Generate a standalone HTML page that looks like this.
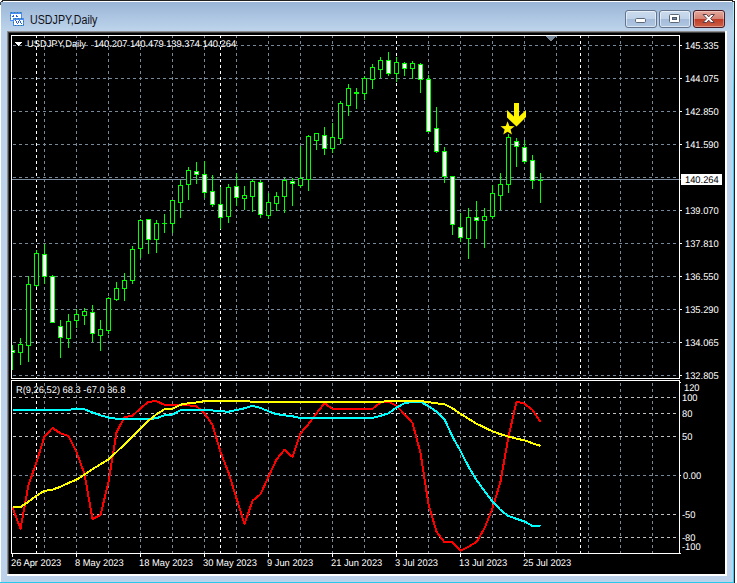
<!DOCTYPE html>
<html><head><meta charset="utf-8"><title>USDJPY,Daily</title>
<style>
html,body{margin:0;padding:0;background:#fff;}
body{width:737px;height:583px;position:relative;overflow:hidden;font-family:"Liberation Sans",sans-serif;}
#win{position:absolute;left:0;top:0;width:735px;height:583px;background:#bcd2ea;overflow:hidden;}
#win div{position:absolute;}
#tb{left:0;top:2px;width:735px;height:29px;background:linear-gradient(#9ab5d6,#bed4ec);}
.t{position:absolute;font-size:9.7px;line-height:10px;height:10px;white-space:pre;letter-spacing:0;transform-origin:0 100%;transform:scaleX(0.962);text-rendering:geometricPrecision;}
#title{position:absolute;left:29.5px;top:13px;font-size:12px;line-height:14px;color:#101018;white-space:pre;transform-origin:0 0;transform:scaleX(0.89);}
.btn{top:10px;width:30px;height:16px;border:1px solid #64748c;border-radius:3px;background:linear-gradient(#cbdbee 0,#bfd2e8 48%,#a4bcda 52%,#b0c7e2 100%);box-shadow:inset 0 0 0 1px rgba(255,255,255,.55);}
</style></head><body>
<div id="win">
 <div id="tb"></div>
 <div style="left:0;top:0;width:735px;height:1px;background:#202020"></div>
 <div style="left:0;top:1px;width:734px;height:1px;background:#fdfeff"></div>
 <div style="left:0;top:1px;width:1px;height:582px;background:#fbfdff"></div>
 <div style="left:733px;top:2px;width:1px;height:581px;background:linear-gradient(#b4ecfa 0,#9ee4f7 30px,#35cdf5 90px,#35cdf5 100%)"></div>
 <div style="left:734px;top:0;width:1px;height:583px;background:#202020"></div>
 <div style="left:0px;top:582px;width:734px;height:1px;background:#27c9ec"></div>
 <!-- corners -->
 <div style="left:0;top:0;width:2px;height:2px;background:#fff"></div>
 <div style="left:1px;top:1px;width:2px;height:1px;background:#303030"></div>
 <div style="left:0px;top:2px;width:1px;height:3px;background:#505050"></div>
 <div style="left:733px;top:0;width:2px;height:1px;background:#fff"></div>
 <div style="left:732px;top:1px;width:2px;height:1px;background:#303030"></div>
 <!-- client sunken border + black -->
 <div style="left:7px;top:31px;width:720px;height:545px;background:#fff"></div>
 <div style="left:7px;top:31px;width:718px;height:543px;background:#8c8c8c"></div>
 <div style="left:8px;top:32px;width:717px;height:542px;background:#404040"></div>
 <div style="left:9px;top:33px;width:716px;height:541px;background:#000"></div>
 <!-- icon -->
 <svg style="position:absolute;left:10px;top:12px" width="15" height="15" viewBox="0 0 15 15" shape-rendering="crispEdges">
  <rect x="0" y="0" width="12" height="9" fill="#4a8cf6"/>
  <rect x="1" y="2" width="10" height="6" fill="#fff"/>
  <rect x="3" y="6" width="11" height="8" fill="#4a8cf6"/>
  <rect x="4" y="8" width="9" height="5" fill="#fff"/>
  <g fill="#2f5fd8"><rect x="2" y="4" width="2" height="1"/><rect x="3" y="3" width="1" height="1"/><rect x="6" y="3" width="1" height="2"/><rect x="7" y="4" width="1" height="1"/>
  <rect x="5" y="8" width="1" height="1"/><rect x="6" y="9" width="1" height="2"/><rect x="7" y="11" width="1" height="1"/><rect x="8" y="9" width="1" height="2"/><rect x="9" y="8" width="1" height="1"/><rect x="10" y="9" width="1" height="2"/><rect x="11" y="11" width="1" height="1"/></g>
  <g fill="#2f7f6f"><rect x="1" y="0" width="1" height="1"/><rect x="4" y="0" width="1" height="1"/><rect x="7" y="0" width="1" height="1"/><rect x="10" y="0" width="1" height="1"/><rect x="0" y="3" width="1" height="1"/><rect x="0" y="6" width="1" height="1"/><rect x="5" y="6" width="1" height="1"/><rect x="8" y="6" width="1" height="1"/><rect x="11" y="6" width="1" height="1"/><rect x="13" y="9" width="1" height="1"/><rect x="13" y="12" width="1" height="1"/><rect x="5" y="13" width="1" height="1"/><rect x="8" y="13" width="1" height="1"/><rect x="11" y="13" width="1" height="1"/><rect x="3" y="10" width="1" height="1"/></g>
 </svg>
 <span id="title">USDJPY,Daily</span>
 <!-- buttons -->
 <div class="btn" style="left:625px"></div>
 <div class="btn" style="left:659px"></div>
 <div class="btn" style="left:693px;border-color:#4c1a22;background:linear-gradient(#e4a89c 0,#d58374 48%,#c03c27 52%,#cb6046 100%);box-shadow:inset 0 0 0 1px rgba(255,255,255,.35)"></div>
 <svg style="position:absolute;left:625px;top:10px" width="100" height="18" viewBox="0 0 100 18">
  <rect x="10.5" y="8.5" width="10" height="4" rx="1.2" fill="#fff" stroke="#5c6878"/>
  <rect x="44.5" y="4.5" width="10" height="8" rx="1" fill="#fff" stroke="#5c6878"/>
  <rect x="47.5" y="7.5" width="4" height="2" fill="#7688a4" stroke="#4c5868"/>
  <path d="M78 4.5 L81.6 4.5 L83.7 6.9 L85.8 4.5 L89.4 4.5 L85.6 8.6 L89.4 12.5 L85.8 12.5 L83.7 10.2 L81.6 12.5 L78 12.5 L81.8 8.6 Z" fill="#fff" stroke="#5a4048" stroke-width="1"/>
 </svg>
</div>
<svg width="737" height="583" viewBox="0 0 737 583" style="position:absolute;left:0;top:0"><defs><clipPath id="ind"><rect x="12" y="381" width="667" height="172"/></clipPath></defs><g shape-rendering="crispEdges" stroke-width="1" fill="none"><line x1="36.5" y1="35" x2="36.5" y2="554" stroke="#ffffff" stroke-dasharray="3 3"/><line x1="44.5" y1="35" x2="44.5" y2="554" stroke="#778899" stroke-dasharray="3 3"/><line x1="76.5" y1="35" x2="76.5" y2="554" stroke="#778899" stroke-dasharray="3 3"/><line x1="108.5" y1="35" x2="108.5" y2="554" stroke="#778899" stroke-dasharray="3 3"/><line x1="140.5" y1="35" x2="140.5" y2="554" stroke="#778899" stroke-dasharray="3 3"/><line x1="172.5" y1="35" x2="172.5" y2="554" stroke="#778899" stroke-dasharray="3 3"/><line x1="204.5" y1="35" x2="204.5" y2="554" stroke="#778899" stroke-dasharray="3 3"/><line x1="220.5" y1="35" x2="220.5" y2="554" stroke="#ffffff" stroke-dasharray="3 3"/><line x1="236.5" y1="35" x2="236.5" y2="554" stroke="#778899" stroke-dasharray="3 3"/><line x1="268.5" y1="35" x2="268.5" y2="554" stroke="#778899" stroke-dasharray="3 3"/><line x1="300.5" y1="35" x2="300.5" y2="554" stroke="#778899" stroke-dasharray="3 3"/><line x1="332.5" y1="35" x2="332.5" y2="554" stroke="#778899" stroke-dasharray="3 3"/><line x1="364.5" y1="35" x2="364.5" y2="554" stroke="#778899" stroke-dasharray="3 3"/><line x1="396.5" y1="35" x2="396.5" y2="554" stroke="#ffffff" stroke-dasharray="3 3"/><line x1="428.5" y1="35" x2="428.5" y2="554" stroke="#778899" stroke-dasharray="3 3"/><line x1="460.5" y1="35" x2="460.5" y2="554" stroke="#778899" stroke-dasharray="3 3"/><line x1="492.5" y1="35" x2="492.5" y2="554" stroke="#778899" stroke-dasharray="3 3"/><line x1="524.5" y1="35" x2="524.5" y2="554" stroke="#778899" stroke-dasharray="3 3"/><line x1="556.5" y1="35" x2="556.5" y2="554" stroke="#778899" stroke-dasharray="3 3"/><line x1="580.5" y1="35" x2="580.5" y2="554" stroke="#ffffff" stroke-dasharray="3 3"/><line x1="588.5" y1="35" x2="588.5" y2="554" stroke="#778899" stroke-dasharray="3 3"/><line x1="620.5" y1="35" x2="620.5" y2="554" stroke="#778899" stroke-dasharray="3 3"/><line x1="652.5" y1="35" x2="652.5" y2="554" stroke="#778899" stroke-dasharray="3 3"/><line x1="13" y1="45.5" x2="679" y2="45.5" stroke="#778899" stroke-dasharray="3 3"/><line x1="13" y1="78.5" x2="679" y2="78.5" stroke="#778899" stroke-dasharray="3 3"/><line x1="13" y1="111.5" x2="679" y2="111.5" stroke="#778899" stroke-dasharray="3 3"/><line x1="13" y1="144.5" x2="679" y2="144.5" stroke="#778899" stroke-dasharray="3 3"/><line x1="13" y1="177.5" x2="679" y2="177.5" stroke="#778899" stroke-dasharray="3 3"/><line x1="13" y1="210.5" x2="679" y2="210.5" stroke="#778899" stroke-dasharray="3 3"/><line x1="13" y1="243.5" x2="679" y2="243.5" stroke="#778899" stroke-dasharray="3 3"/><line x1="13" y1="276.5" x2="679" y2="276.5" stroke="#778899" stroke-dasharray="3 3"/><line x1="13" y1="309.5" x2="679" y2="309.5" stroke="#778899" stroke-dasharray="3 3"/><line x1="13" y1="342.5" x2="679" y2="342.5" stroke="#778899" stroke-dasharray="3 3"/><line x1="13" y1="375.5" x2="679" y2="375.5" stroke="#778899" stroke-dasharray="3 3"/><line x1="13" y1="397.5" x2="679" y2="397.5" stroke="#c0c0c0" stroke-dasharray="3 3"/><line x1="13" y1="413.5" x2="679" y2="413.5" stroke="#c0c0c0" stroke-dasharray="3 3"/><line x1="13" y1="436.5" x2="679" y2="436.5" stroke="#c0c0c0" stroke-dasharray="3 3"/><line x1="13" y1="475.5" x2="679" y2="475.5" stroke="#778899" stroke-dasharray="3 3"/><line x1="13" y1="514.5" x2="679" y2="514.5" stroke="#c0c0c0" stroke-dasharray="3 3"/><line x1="13" y1="537.5" x2="679" y2="537.5" stroke="#c0c0c0" stroke-dasharray="3 3"/></g>
<g shape-rendering="crispEdges">
<rect x="12" y="179" width="668" height="1" fill="#7d8da1"/>
<rect x="11" y="35" width="669" height="1" fill="#ffffff"/>
<rect x="11" y="378" width="669" height="1" fill="#ffffff"/>
<rect x="11" y="35" width="1" height="344" fill="#ffffff"/>
<rect x="679" y="35" width="1" height="344" fill="#ffffff"/>
<rect x="11" y="380" width="669" height="1" fill="#ffffff"/>
<rect x="11" y="553" width="669" height="1" fill="#ffffff"/>
<rect x="11" y="380" width="1" height="174" fill="#ffffff"/>
<rect x="679" y="380" width="1" height="174" fill="#ffffff"/>
<rect x="12" y="379" width="667" height="1" fill="#000000"/>
<rect x="680" y="45" width="2" height="1" fill="#ffffff"/>
<rect x="680" y="78" width="2" height="1" fill="#ffffff"/>
<rect x="680" y="111" width="2" height="1" fill="#ffffff"/>
<rect x="680" y="144" width="2" height="1" fill="#ffffff"/>
<rect x="680" y="210" width="2" height="1" fill="#ffffff"/>
<rect x="680" y="243" width="2" height="1" fill="#ffffff"/>
<rect x="680" y="276" width="2" height="1" fill="#ffffff"/>
<rect x="680" y="309" width="2" height="1" fill="#ffffff"/>
<rect x="680" y="342" width="2" height="1" fill="#ffffff"/>
<rect x="680" y="375" width="2" height="1" fill="#ffffff"/>
<rect x="680" y="382" width="1" height="1" fill="#ffffff"/>
<rect x="680" y="475" width="1" height="1" fill="#ffffff"/>
<rect x="680" y="553" width="1" height="1" fill="#ffffff"/>
<rect x="680" y="179" width="1" height="1" fill="#7d8da1"/>
<rect x="12" y="554" width="1" height="3" fill="#ffffff"/>
<rect x="76" y="554" width="1" height="3" fill="#ffffff"/>
<rect x="140" y="554" width="1" height="3" fill="#ffffff"/>
<rect x="204" y="554" width="1" height="3" fill="#ffffff"/>
<rect x="268" y="554" width="1" height="3" fill="#ffffff"/>
<rect x="332" y="554" width="1" height="3" fill="#ffffff"/>
<rect x="396" y="554" width="1" height="3" fill="#ffffff"/>
<rect x="460" y="554" width="1" height="3" fill="#ffffff"/>
<rect x="524" y="554" width="1" height="3" fill="#ffffff"/>
<rect x="546" y="36" width="10" height="1" fill="#778899"/>
<rect x="547" y="37" width="8" height="1" fill="#778899"/>
<rect x="548" y="38" width="6" height="1" fill="#778899"/>
<rect x="549" y="39" width="4" height="1" fill="#778899"/>
<rect x="550" y="40" width="2" height="1" fill="#778899"/>
<rect x="15" y="42" width="7" height="1" fill="#ffffff"/>
<rect x="16" y="43" width="5" height="1" fill="#ffffff"/>
<rect x="17" y="44" width="3" height="1" fill="#ffffff"/>
<rect x="18" y="45" width="1" height="1" fill="#ffffff"/>
<rect x="12" y="345" width="1" height="25" fill="#00ff00"/>
<rect x="12" y="350" width="3" height="3" fill="#00ff00"/>
<rect x="12" y="351" width="2" height="1" fill="#ffffff"/>
<rect x="20" y="338" width="1" height="27" fill="#00ff00"/>
<rect x="18" y="344" width="5" height="9" fill="#00ff00"/>
<rect x="19" y="345" width="3" height="7" fill="#000000"/>
<rect x="28" y="276" width="1" height="86" fill="#00ff00"/>
<rect x="26" y="284" width="5" height="62" fill="#00ff00"/>
<rect x="27" y="285" width="3" height="60" fill="#000000"/>
<rect x="36" y="250" width="1" height="37" fill="#00ff00"/>
<rect x="34" y="253" width="5" height="33" fill="#00ff00"/>
<rect x="35" y="254" width="3" height="31" fill="#000000"/>
<rect x="44" y="244" width="1" height="40" fill="#00ff00"/>
<rect x="42" y="254" width="5" height="23" fill="#00ff00"/>
<rect x="43" y="255" width="3" height="21" fill="#ffffff"/>
<rect x="52" y="275" width="1" height="48" fill="#00ff00"/>
<rect x="50" y="276" width="5" height="47" fill="#00ff00"/>
<rect x="51" y="277" width="3" height="45" fill="#ffffff"/>
<rect x="60" y="320" width="1" height="38" fill="#00ff00"/>
<rect x="58" y="326" width="5" height="12" fill="#00ff00"/>
<rect x="59" y="327" width="3" height="10" fill="#ffffff"/>
<rect x="68" y="314" width="1" height="34" fill="#00ff00"/>
<rect x="66" y="321" width="5" height="18" fill="#00ff00"/>
<rect x="67" y="322" width="3" height="16" fill="#000000"/>
<rect x="76" y="309" width="1" height="19" fill="#00ff00"/>
<rect x="74" y="314" width="5" height="7" fill="#00ff00"/>
<rect x="75" y="315" width="3" height="5" fill="#000000"/>
<rect x="84" y="308" width="1" height="17" fill="#00ff00"/>
<rect x="82" y="311" width="5" height="5" fill="#00ff00"/>
<rect x="83" y="312" width="3" height="3" fill="#000000"/>
<rect x="92" y="305" width="1" height="37" fill="#00ff00"/>
<rect x="90" y="312" width="5" height="22" fill="#00ff00"/>
<rect x="91" y="313" width="3" height="20" fill="#ffffff"/>
<rect x="100" y="320" width="1" height="31" fill="#00ff00"/>
<rect x="98" y="329" width="5" height="7" fill="#00ff00"/>
<rect x="99" y="330" width="3" height="5" fill="#000000"/>
<rect x="108" y="297" width="1" height="37" fill="#00ff00"/>
<rect x="106" y="298" width="5" height="33" fill="#00ff00"/>
<rect x="107" y="299" width="3" height="31" fill="#000000"/>
<rect x="116" y="282" width="1" height="19" fill="#00ff00"/>
<rect x="114" y="288" width="5" height="12" fill="#00ff00"/>
<rect x="115" y="289" width="3" height="10" fill="#000000"/>
<rect x="124" y="273" width="1" height="28" fill="#00ff00"/>
<rect x="122" y="280" width="5" height="9" fill="#00ff00"/>
<rect x="123" y="281" width="3" height="7" fill="#000000"/>
<rect x="132" y="246" width="1" height="38" fill="#00ff00"/>
<rect x="130" y="249" width="5" height="32" fill="#00ff00"/>
<rect x="131" y="250" width="3" height="30" fill="#000000"/>
<rect x="140" y="219" width="1" height="39" fill="#00ff00"/>
<rect x="138" y="220" width="5" height="29" fill="#00ff00"/>
<rect x="139" y="221" width="3" height="27" fill="#000000"/>
<rect x="148" y="219" width="1" height="35" fill="#00ff00"/>
<rect x="146" y="219" width="5" height="21" fill="#00ff00"/>
<rect x="147" y="220" width="3" height="19" fill="#ffffff"/>
<rect x="156" y="220" width="1" height="33" fill="#00ff00"/>
<rect x="154" y="223" width="5" height="17" fill="#00ff00"/>
<rect x="155" y="224" width="3" height="15" fill="#000000"/>
<rect x="164" y="214" width="1" height="19" fill="#00ff00"/>
<rect x="162" y="223" width="5" height="1" fill="#00ff00"/>
<rect x="172" y="200" width="1" height="33" fill="#00ff00"/>
<rect x="170" y="200" width="5" height="24" fill="#00ff00"/>
<rect x="171" y="201" width="3" height="22" fill="#000000"/>
<rect x="180" y="180" width="1" height="38" fill="#00ff00"/>
<rect x="178" y="185" width="5" height="18" fill="#00ff00"/>
<rect x="179" y="186" width="3" height="16" fill="#000000"/>
<rect x="188" y="167" width="1" height="33" fill="#00ff00"/>
<rect x="186" y="170" width="5" height="15" fill="#00ff00"/>
<rect x="187" y="171" width="3" height="13" fill="#000000"/>
<rect x="196" y="162" width="1" height="22" fill="#00ff00"/>
<rect x="194" y="171" width="5" height="4" fill="#00ff00"/>
<rect x="195" y="172" width="3" height="2" fill="#ffffff"/>
<rect x="204" y="161" width="1" height="37" fill="#00ff00"/>
<rect x="202" y="174" width="5" height="19" fill="#00ff00"/>
<rect x="203" y="175" width="3" height="17" fill="#ffffff"/>
<rect x="212" y="175" width="1" height="32" fill="#00ff00"/>
<rect x="210" y="191" width="5" height="14" fill="#00ff00"/>
<rect x="211" y="192" width="3" height="12" fill="#ffffff"/>
<rect x="220" y="187" width="1" height="42" fill="#00ff00"/>
<rect x="218" y="204" width="5" height="14" fill="#00ff00"/>
<rect x="219" y="205" width="3" height="12" fill="#ffffff"/>
<rect x="228" y="184" width="1" height="39" fill="#00ff00"/>
<rect x="226" y="187" width="5" height="30" fill="#00ff00"/>
<rect x="227" y="188" width="3" height="28" fill="#000000"/>
<rect x="236" y="173" width="1" height="33" fill="#00ff00"/>
<rect x="234" y="186" width="5" height="12" fill="#00ff00"/>
<rect x="235" y="187" width="3" height="10" fill="#ffffff"/>
<rect x="244" y="186" width="1" height="24" fill="#00ff00"/>
<rect x="242" y="195" width="5" height="4" fill="#00ff00"/>
<rect x="243" y="196" width="3" height="2" fill="#000000"/>
<rect x="252" y="179" width="1" height="33" fill="#00ff00"/>
<rect x="250" y="181" width="5" height="16" fill="#00ff00"/>
<rect x="251" y="182" width="3" height="14" fill="#000000"/>
<rect x="260" y="180" width="1" height="38" fill="#00ff00"/>
<rect x="258" y="182" width="5" height="33" fill="#00ff00"/>
<rect x="259" y="183" width="3" height="31" fill="#ffffff"/>
<rect x="268" y="193" width="1" height="26" fill="#00ff00"/>
<rect x="266" y="202" width="5" height="14" fill="#00ff00"/>
<rect x="267" y="203" width="3" height="12" fill="#000000"/>
<rect x="276" y="192" width="1" height="19" fill="#00ff00"/>
<rect x="274" y="196" width="5" height="8" fill="#00ff00"/>
<rect x="275" y="197" width="3" height="6" fill="#000000"/>
<rect x="284" y="178" width="1" height="35" fill="#00ff00"/>
<rect x="282" y="180" width="5" height="17" fill="#00ff00"/>
<rect x="283" y="181" width="3" height="15" fill="#000000"/>
<rect x="292" y="178" width="1" height="28" fill="#00ff00"/>
<rect x="290" y="181" width="5" height="3" fill="#00ff00"/>
<rect x="291" y="182" width="3" height="1" fill="#ffffff"/>
<rect x="300" y="146" width="1" height="42" fill="#00ff00"/>
<rect x="298" y="178" width="5" height="8" fill="#00ff00"/>
<rect x="299" y="179" width="3" height="6" fill="#000000"/>
<rect x="308" y="135" width="1" height="56" fill="#00ff00"/>
<rect x="306" y="136" width="5" height="44" fill="#00ff00"/>
<rect x="307" y="137" width="3" height="42" fill="#000000"/>
<rect x="316" y="133" width="1" height="17" fill="#00ff00"/>
<rect x="314" y="133" width="5" height="8" fill="#00ff00"/>
<rect x="315" y="134" width="3" height="6" fill="#000000"/>
<rect x="324" y="127" width="1" height="28" fill="#00ff00"/>
<rect x="322" y="135" width="5" height="14" fill="#00ff00"/>
<rect x="323" y="136" width="3" height="12" fill="#ffffff"/>
<rect x="332" y="123" width="1" height="30" fill="#00ff00"/>
<rect x="330" y="137" width="5" height="12" fill="#00ff00"/>
<rect x="331" y="138" width="3" height="10" fill="#000000"/>
<rect x="340" y="101" width="1" height="43" fill="#00ff00"/>
<rect x="338" y="103" width="5" height="36" fill="#00ff00"/>
<rect x="339" y="104" width="3" height="34" fill="#000000"/>
<rect x="348" y="84" width="1" height="32" fill="#00ff00"/>
<rect x="346" y="88" width="5" height="18" fill="#00ff00"/>
<rect x="347" y="89" width="3" height="16" fill="#000000"/>
<rect x="356" y="88" width="1" height="21" fill="#00ff00"/>
<rect x="354" y="92" width="5" height="2" fill="#00ff00"/>
<rect x="364" y="76" width="1" height="24" fill="#00ff00"/>
<rect x="362" y="78" width="5" height="16" fill="#00ff00"/>
<rect x="363" y="79" width="3" height="14" fill="#000000"/>
<rect x="372" y="64" width="1" height="25" fill="#00ff00"/>
<rect x="370" y="67" width="5" height="13" fill="#00ff00"/>
<rect x="371" y="68" width="3" height="11" fill="#000000"/>
<rect x="380" y="57" width="1" height="21" fill="#00ff00"/>
<rect x="378" y="60" width="5" height="10" fill="#00ff00"/>
<rect x="379" y="61" width="3" height="8" fill="#000000"/>
<rect x="388" y="52" width="1" height="24" fill="#00ff00"/>
<rect x="386" y="60" width="5" height="14" fill="#00ff00"/>
<rect x="387" y="61" width="3" height="12" fill="#ffffff"/>
<rect x="396" y="57" width="1" height="25" fill="#00ff00"/>
<rect x="394" y="62" width="5" height="12" fill="#00ff00"/>
<rect x="395" y="63" width="3" height="10" fill="#000000"/>
<rect x="404" y="62" width="1" height="14" fill="#00ff00"/>
<rect x="402" y="63" width="5" height="6" fill="#00ff00"/>
<rect x="403" y="64" width="3" height="4" fill="#ffffff"/>
<rect x="412" y="61" width="1" height="18" fill="#00ff00"/>
<rect x="410" y="63" width="5" height="6" fill="#00ff00"/>
<rect x="411" y="64" width="3" height="4" fill="#000000"/>
<rect x="420" y="63" width="1" height="30" fill="#00ff00"/>
<rect x="418" y="64" width="5" height="16" fill="#00ff00"/>
<rect x="419" y="65" width="3" height="14" fill="#ffffff"/>
<rect x="428" y="75" width="1" height="57" fill="#00ff00"/>
<rect x="426" y="79" width="5" height="53" fill="#00ff00"/>
<rect x="427" y="80" width="3" height="51" fill="#ffffff"/>
<rect x="436" y="107" width="1" height="46" fill="#00ff00"/>
<rect x="434" y="128" width="5" height="24" fill="#00ff00"/>
<rect x="435" y="129" width="3" height="22" fill="#ffffff"/>
<rect x="444" y="147" width="1" height="36" fill="#00ff00"/>
<rect x="442" y="151" width="5" height="26" fill="#00ff00"/>
<rect x="443" y="152" width="3" height="24" fill="#ffffff"/>
<rect x="452" y="176" width="1" height="59" fill="#00ff00"/>
<rect x="450" y="176" width="5" height="49" fill="#00ff00"/>
<rect x="451" y="177" width="3" height="47" fill="#ffffff"/>
<rect x="460" y="213" width="1" height="29" fill="#00ff00"/>
<rect x="458" y="227" width="5" height="11" fill="#00ff00"/>
<rect x="459" y="228" width="3" height="9" fill="#ffffff"/>
<rect x="468" y="208" width="1" height="51" fill="#00ff00"/>
<rect x="466" y="217" width="5" height="22" fill="#00ff00"/>
<rect x="467" y="218" width="3" height="20" fill="#000000"/>
<rect x="476" y="201" width="1" height="38" fill="#00ff00"/>
<rect x="474" y="217" width="5" height="4" fill="#00ff00"/>
<rect x="475" y="218" width="3" height="2" fill="#ffffff"/>
<rect x="484" y="208" width="1" height="40" fill="#00ff00"/>
<rect x="482" y="216" width="5" height="5" fill="#00ff00"/>
<rect x="483" y="217" width="3" height="3" fill="#000000"/>
<rect x="492" y="185" width="1" height="34" fill="#00ff00"/>
<rect x="490" y="193" width="5" height="24" fill="#00ff00"/>
<rect x="491" y="194" width="3" height="22" fill="#000000"/>
<rect x="500" y="173" width="1" height="37" fill="#00ff00"/>
<rect x="498" y="184" width="5" height="12" fill="#00ff00"/>
<rect x="499" y="185" width="3" height="10" fill="#000000"/>
<rect x="508" y="134" width="1" height="59" fill="#00ff00"/>
<rect x="506" y="137" width="5" height="48" fill="#00ff00"/>
<rect x="507" y="138" width="3" height="46" fill="#000000"/>
<rect x="516" y="138" width="1" height="29" fill="#00ff00"/>
<rect x="514" y="141" width="5" height="6" fill="#00ff00"/>
<rect x="515" y="142" width="3" height="4" fill="#ffffff"/>
<rect x="524" y="140" width="1" height="24" fill="#00ff00"/>
<rect x="522" y="147" width="5" height="15" fill="#00ff00"/>
<rect x="523" y="148" width="3" height="13" fill="#ffffff"/>
<rect x="532" y="155" width="1" height="34" fill="#00ff00"/>
<rect x="530" y="160" width="5" height="21" fill="#00ff00"/>
<rect x="531" y="161" width="3" height="19" fill="#ffffff"/>
<rect x="540" y="173" width="1" height="30" fill="#00ff00"/>
<rect x="538" y="180" width="5" height="1" fill="#00ff00"/>
<rect x="681" y="174" width="41" height="11" fill="#ffffff"/>
</g>
<g clip-path="url(#ind)">
<polyline points="12.5,507.5 20.5,528.7 28.5,485 36.5,462 44.5,436.5 52.5,428 60.5,433.3 68.5,436 76.5,452 84.5,474 92.5,519 100.5,515 108.5,482 116.5,432.5 124.5,417 132.5,415.8 140.5,408.3 148.5,401.7 156.5,401.3 164.5,404.7 172.5,405 180.5,404.7 188.5,405.3 196.5,406.2 204.5,413.3 212.5,425 220.5,452 228.5,472.5 236.5,498.3 244.5,524.2 252.5,500.8 260.5,494.2 268.5,476.7 276.5,459.5 284.5,449.7 292.5,457 300.5,433.3 308.5,424.2 316.5,413.3 324.5,403.3 332.5,408.8 340.5,408.8 348.5,408.8 356.5,408.8 364.5,408.8 372.5,408.8 380.5,402.5 388.5,401.7 396.5,405.8 404.5,414.2 412.5,423 420.5,453 428.5,504.2 436.5,531.7 444.5,542.2 452.5,542.5 460.5,550.8 468.5,546.7 476.5,542 484.5,528.3 492.5,508.3 500.5,481.7 508.5,436.5 516.5,401.7 524.5,403.7 532.5,410 540.5,422" fill="none" stroke="#ff0000" stroke-width="2" stroke-linejoin="round" shape-rendering="crispEdges"/>
<polyline points="12.5,410 20.5,410 28.5,410 36.5,410 44.5,410 52.5,410 60.5,410 68.5,410 76.5,408.5 84.5,409.2 92.5,412.5 100.5,415.3 108.5,417.5 116.5,418.8 124.5,419.2 132.5,419.2 140.5,419.2 148.5,419 156.5,418.3 164.5,415.3 172.5,414.5 180.5,410.3 188.5,410 196.5,409.7 204.5,409.7 212.5,410.5 220.5,411.3 228.5,411.7 236.5,410 244.5,408.3 252.5,405.8 260.5,408 268.5,411.2 276.5,414.2 284.5,415.3 292.5,416.3 300.5,418 308.5,418 316.5,418 324.5,418 332.5,418 340.5,418 348.5,418 356.5,418 364.5,418 372.5,417.8 380.5,415.8 388.5,413.3 396.5,407.5 404.5,403.3 412.5,401.7 420.5,401.7 428.5,406.2 436.5,411.7 444.5,419.2 452.5,436.7 460.5,450.8 468.5,466.7 476.5,480 484.5,491 492.5,501.5 500.5,510 508.5,516 516.5,518.8 524.5,521.5 532.5,526 540.5,526.5" fill="none" stroke="#00ffff" stroke-width="2" stroke-linejoin="round" shape-rendering="crispEdges"/>
<polyline points="12.5,507 20.5,507 28.5,501.7 36.5,495.8 44.5,490.8 52.5,489.7 60.5,486.7 68.5,483 76.5,479.7 84.5,474.5 92.5,469.2 100.5,464.2 108.5,459.5 116.5,452 124.5,444.2 132.5,436.7 140.5,428.3 148.5,420.8 156.5,414.2 164.5,409.2 172.5,408.7 180.5,404.7 188.5,403.3 196.5,402.5 204.5,401.2 212.5,401 220.5,401 228.5,401 236.5,401 244.5,401 252.5,401.8 260.5,401.8 268.5,401.8 276.5,401.8 284.5,401.8 292.5,401.8 300.5,401.8 308.5,401.8 316.5,401.8 324.5,401.8 332.5,401.8 340.5,401.8 348.5,401.8 356.5,401.8 364.5,401.8 372.5,401.8 380.5,401.8 388.5,401.2 396.5,401 404.5,401 412.5,401 420.5,401 428.5,402.2 436.5,403.3 444.5,404.2 452.5,408.3 460.5,413.8 468.5,418.8 476.5,423.7 484.5,427.5 492.5,431.3 500.5,434.2 508.5,436.7 516.5,438.7 524.5,440.3 532.5,443.3 540.5,445.8" fill="none" stroke="#ffff00" stroke-width="2" stroke-linejoin="round" shape-rendering="crispEdges"/>
</g>
<polygon points="514,103 519,103 519,116.5 526,110 526,117 516.5,126.5 507,117.5 507,110 514,116.5" fill="#fff400"/>
<polygon points="507.60,121.20 509.42,126.09 514.64,126.31 510.55,129.56 511.95,134.59 507.60,131.70 503.25,134.59 504.65,129.56 500.56,126.31 505.78,126.09" fill="#fff400"/></svg>
<div id="txt"><span class="t" style="left:685px;top:42px;color:#fff;">145.335</span><span class="t" style="left:685px;top:75px;color:#fff;">144.075</span><span class="t" style="left:685px;top:108px;color:#fff;">142.850</span><span class="t" style="left:685px;top:141px;color:#fff;">141.590</span><span class="t" style="left:685px;top:207px;color:#fff;">139.070</span><span class="t" style="left:685px;top:240px;color:#fff;">137.810</span><span class="t" style="left:685px;top:273px;color:#fff;">136.550</span><span class="t" style="left:685px;top:306px;color:#fff;">135.290</span><span class="t" style="left:685px;top:339px;color:#fff;">134.065</span><span class="t" style="left:685px;top:372px;color:#fff;">132.805</span><span class="t" style="left:685px;top:176px;color:#000;">140.264</span><span class="t" style="left:27px;top:40px;color:#fff;">USDJPY,Daily   140.207 140.479 139.374 140.264</span><span class="t" style="left:16px;top:386px;color:#fff;">R(9,26,52) 68.3 -67.0 36.8</span><span class="t" style="left:684px;top:384px;color:#fff;">120</span><span class="t" style="left:682px;top:394px;color:#fff;">100</span><span class="t" style="left:682px;top:410px;color:#fff;">80</span><span class="t" style="left:682px;top:433px;color:#fff;">50</span><span class="t" style="left:683px;top:472px;color:#fff;">0.00</span><span class="t" style="left:682px;top:511px;color:#fff;">-50</span><span class="t" style="left:682px;top:534px;color:#fff;">-80</span><span class="t" style="left:682px;top:543px;color:#fff;">-100</span><span class="t" style="left:11px;top:559px;color:#fff;">26 Apr 2023</span><span class="t" style="left:75px;top:559px;color:#fff;">8 May 2023</span><span class="t" style="left:139px;top:559px;color:#fff;">18 May 2023</span><span class="t" style="left:203px;top:559px;color:#fff;">30 May 2023</span><span class="t" style="left:267px;top:559px;color:#fff;">9 Jun 2023</span><span class="t" style="left:331px;top:559px;color:#fff;">21 Jun 2023</span><span class="t" style="left:395px;top:559px;color:#fff;">3 Jul 2023</span><span class="t" style="left:459px;top:559px;color:#fff;">13 Jul 2023</span><span class="t" style="left:523px;top:559px;color:#fff;">25 Jul 2023</span></div>
</body></html>
